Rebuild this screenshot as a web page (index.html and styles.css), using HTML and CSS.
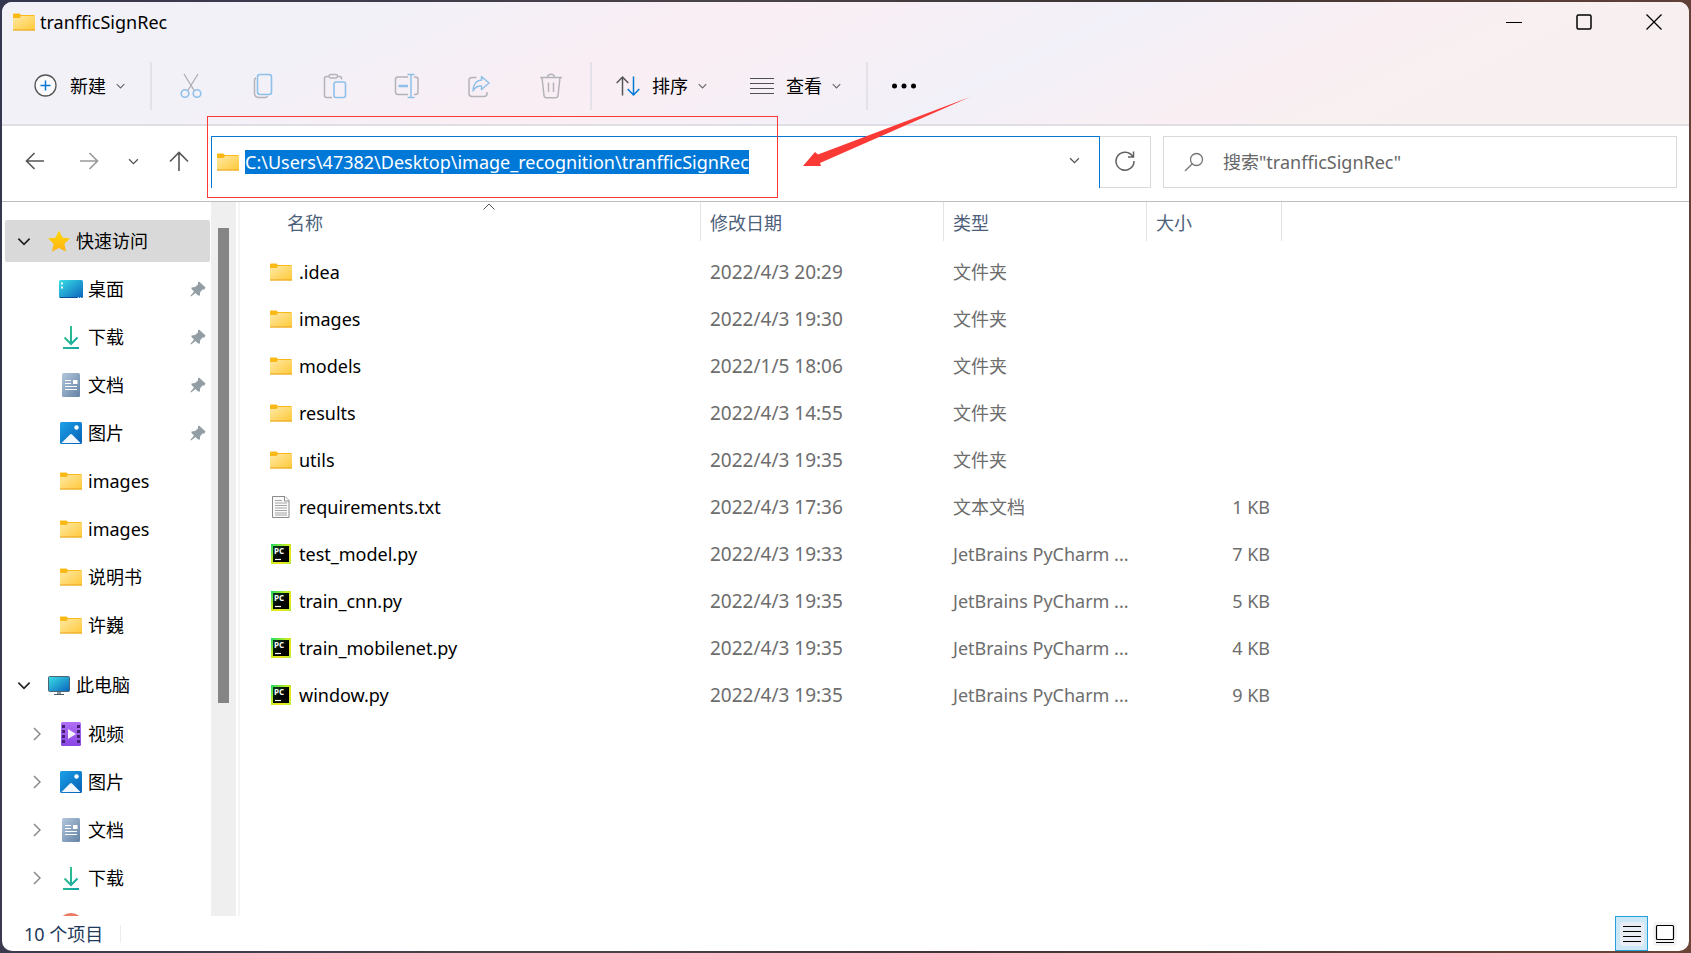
FILE: index.html
```html
<!DOCTYPE html>
<html lang="zh-CN">
<head>
<meta charset="utf-8">
<title>tranfficSignRec</title>
<link rel="stylesheet" href="styles.css">
</head>
<body>
<svg class="defs" aria-hidden="true">
  <defs>
    <linearGradient id="gFolder" x1="0" y1="0" x2="1" y2="1"><stop offset="0" stop-color="#ffe9a6"/><stop offset="1" stop-color="#ffc937"/></linearGradient>
    <linearGradient id="gStar" x1="0" y1="0" x2="0" y2="1"><stop offset="0" stop-color="#ffd800"/><stop offset="1" stop-color="#ffb31a"/></linearGradient>
    <linearGradient id="gDesk" x1="0" y1="0" x2="1" y2="1"><stop offset="0" stop-color="#3ae0e6"/><stop offset="1" stop-color="#0a62bd"/></linearGradient>
    <linearGradient id="gDown" x1="0" y1="0" x2="1" y2="1"><stop offset="0" stop-color="#3cc985"/><stop offset="1" stop-color="#10a2a5"/></linearGradient>
    <linearGradient id="gDoc" x1="0" y1="0" x2="1" y2="1"><stop offset="0" stop-color="#b3c7dc"/><stop offset="1" stop-color="#6382a5"/></linearGradient>
    <linearGradient id="gPic" x1="0" y1="0" x2="1" y2="1"><stop offset="0" stop-color="#1ba1e8"/><stop offset="1" stop-color="#0760b5"/></linearGradient>
    <linearGradient id="gVid" x1="0" y1="0" x2="0" y2="1"><stop offset="0" stop-color="#b070f4"/><stop offset="1" stop-color="#8a45e6"/></linearGradient>
    <linearGradient id="gPc" x1="0" y1="0" x2="1" y2="1"><stop offset="0" stop-color="#17dc6a"/><stop offset=".4" stop-color="#b9ec1e"/><stop offset=".7" stop-color="#f0e51c"/><stop offset="1" stop-color="#b4ee3c"/></linearGradient>
    <linearGradient id="gPcIn" x1="0" y1="0" x2="1" y2="1"><stop offset="0" stop-color="#0c3d1c"/><stop offset=".6" stop-color="#000"/></linearGradient>
    <symbol id="folder" viewBox="0 0 22 18"><path d="M0 1.500Q0 .5 1 .5H6.500L8 2H21.500V6H0Z" fill="#fbb917"/><path d="M0 5H6.500L8 3H22V17.500H0Z" fill="url(#gFolder)"/><path d="M0 17H22" stroke="#e9a31c"/></symbol>
    <symbol id="star" viewBox="0 0 22 22"><path d="M11 .5 14.400 7.600 22 8.500 16.400 13.700 18 21.700 11 18 4 21.700 5.600 13.700 0 8.500 7.600 7.600Z" fill="url(#gStar)"/></symbol>
    <symbol id="desktop" viewBox="0 0 24 18"><rect width="24" height="18" rx="1.500" fill="url(#gDesk)"/><path d="M2 2.500h2v2H2zM2 6.500h2v2H2z" fill="#fff"/><path d="M1 17.500H18" stroke="#0b4f94"/><path d="M19 17.500h4" stroke="#bfe0ff" stroke-dasharray="1 1"/></symbol>
    <symbol id="download" viewBox="0 0 16 23"><path d="M8 0V18M1.500 11.500 8 18 14.500 11.500M0 22H16" fill="none" stroke="url(#gDown)" stroke-width="2"/></symbol>
    <symbol id="doc" viewBox="0 0 18 24"><rect width="18" height="24" rx="1.500" fill="url(#gDoc)"/><path d="M3 7.500H9M3 10.500H9M3 13.500H15M3 16.500H15" stroke="#fff" stroke-width="1.200"/><path d="M11 7h4.500v4H11z" fill="#fff"/></symbol>
    <symbol id="picture" viewBox="0 0 22 22"><rect width="22" height="22" rx="1.500" fill="url(#gPic)"/><path d="M1.500 21 10 12.500Q11 11.600 12 12.500L20.500 21Z" fill="#f1f8ff"/><circle cx="16.500" cy="5.500" r="2.200" fill="#fff"/></symbol>
    <symbol id="video" viewBox="0 0 20 24"><rect width="20" height="24" rx="1.500" fill="url(#gVid)"/><path d="M2.500 3V22M17.500 3V22" stroke="#452174" stroke-width="3" stroke-dasharray="3 2"/><path d="M7 7V17L15 12Z" fill="#f5effd"/></symbol>
    <symbol id="pc" viewBox="0 0 22 19"><rect x=".5" y=".5" width="21" height="15" rx="1" fill="url(#gDesk)" stroke="#4f6472"/><path d="M9 16h4v2H9z" fill="#90999f"/><path d="M6 18.500h10" stroke="#4f5960"/></symbol>
    <symbol id="pin" viewBox="0 0 16 16"><path d="M9 .5 15.500 6.500 14.500 8.500 12.500 8.500 10 11.500 10 14.500 8 14.500 5.500 12 1 15.500.3 15 4 10.500 1.500 8 1.500 6.500 5 6 8 3.500 8 1.500Z" fill="#939da4"/></symbol>
    <symbol id="text" viewBox="0 0 18 22"><path d="M.5.5H13L17 4.500V21.500H.5Z" fill="#fafafa" stroke="#8a8a8a"/><path d="M12.500.5V5H17" fill="#fff" stroke="#8a8a8a"/><path d="M3 4.500H10M3 7H15M3 9.500H15M3 12H15M3 14.500H15M3 17H15M3 19H15" stroke="#a5a5a5"/></symbol>
    <symbol id="pycharm" viewBox="0 0 20 20"><rect width="20" height="20" fill="url(#gPc)"/><rect x="2" y="2" width="16" height="16" fill="url(#gPcIn)"/><text class="pc-label" x="3" y="10">PC</text><path d="M4 15.500H10" stroke="#fff" stroke-width="1.200"/></symbol>
    <symbol id="down" viewBox="0 0 12 8"><path d="M1 1.500 6 6.500 11 1.500" fill="none" stroke="currentColor" stroke-width="1.500"/></symbol>
    <symbol id="right" viewBox="0 0 8 14"><path d="M1 1 7 7 1 13" fill="none" stroke="currentColor" stroke-width="1.500"/></symbol>
  </defs>
</svg>

<div class="window">
  <header class="ribbon">
    <div class="titlebar">
      <svg class="i-folder"><use href="#folder"/></svg>
      <h1 class="title">tranfficSignRec</h1>
      <div class="caption">
        <button aria-label="最小化"><svg width="16" height="16"><path d="M0 8.500H16" stroke="#000"/></svg></button>
        <button aria-label="最大化"><svg width="16" height="16"><rect x="1" y="1" width="14" height="14" rx="1.500" fill="none" stroke="#000" stroke-width="1.500"/></svg></button>
        <button aria-label="关闭"><svg width="16" height="16"><path d="M.5.5 15.500 15.500M15.500.5.5 15.500" stroke="#000" stroke-width="1.300"/></svg></button>
      </div>
    </div>
    <div class="toolbar">
      <div class="group group-new">
        <button class="menu-btn"><svg width="24" height="24"><circle cx="11.500" cy="11.500" r="10.500" fill="#fff" fill-opacity=".7" stroke="#555" stroke-width="1.300"/><path d="M11.500 6.500V16.500M6.500 11.500H16.500" stroke="#0078d4" stroke-width="1.500"/></svg><span>新建</span><svg class="i-caret"><use href="#down"/></svg></button>
      </div>
      <div class="group group-edit">
        <button class="icon-btn" aria-label="剪切"><svg width="24" height="26" fill="none" stroke-width="1.300"><path d="M5 1 15.500 18M19 1 8.500 18" stroke="#aeacb3"/><circle cx="6" cy="20.500" r="3.800" stroke="#8fc0ea" stroke-width="1.600"/><circle cx="18" cy="20.500" r="3.800" stroke="#8fc0ea" stroke-width="1.600"/></svg></button>
        <button class="icon-btn" aria-label="复制"><svg width="24" height="26" fill="none" stroke-width="1.500"><path d="M5 5Q3.500 5.500 3.500 7V20Q3.500 24.500 8 24.500H14Q16 24.500 16.500 23" stroke="#b5b3ba"/><rect x="6.500" y="1.500" width="14" height="20" rx="2.500" stroke="#8fc0ea" stroke-width="1.600"/></svg></button>
        <button class="icon-btn" aria-label="粘贴"><svg width="24" height="26" fill="none" stroke-width="1.500"><path d="M6 3.500H3.500Q1.500 3.500 1.500 5.500V22.500Q1.500 24.500 3.500 24.500H9M14 3.500H16.500Q18.500 3.500 18.500 5.500V6.500" stroke="#b5b3ba"/><rect x="6" y="1.500" width="8.500" height="3.500" rx="1.700" stroke="#b5b3ba"/><rect x="11" y="9" width="11.500" height="15.500" rx="2" stroke="#8fc0ea" stroke-width="1.600"/></svg></button>
        <button class="icon-btn" aria-label="重命名"><svg width="26" height="26" fill="none" stroke-width="1.500"><path d="M14 4H4Q1.500 4 1.500 6.500V19Q1.500 21.500 4 21.500H14M20 4H21.500Q24 4 24 6.500V19Q24 21.500 21.500 21.500H20" stroke="#b5b3ba"/><path d="M4.500 13H14" stroke="#8fc0ea" stroke-width="2.500"/><path d="M17 1.500V24.500M13.500 1.500H20.500M13.500 24.500H20.500" stroke="#8fc0ea"/></svg></button>
        <button class="icon-btn" aria-label="共享"><svg width="24" height="26" fill="none" stroke-width="1.500"><path d="M9.500 4.500H5Q2 4.500 2 7.500V20.500Q2 23.500 5 23.500H17Q20 23.500 20 20.500V19" stroke="#b5b3ba"/><path d="M14.500 3.500 22 10 14.500 16.500V13Q9 12.500 6 18Q6.500 7.500 14.500 7Z" stroke="#8fc0ea" stroke-linejoin="round"/></svg></button>
        <button class="icon-btn" aria-label="删除"><svg width="24" height="26" fill="none" stroke="#b5b3ba" stroke-width="1.500"><path d="M1 4.500H23M8.500 4.500Q8.500 1.300 12 1.300T15.500 4.500M3 4.500 5 22.500Q5.300 24.700 7.500 24.700H16.500Q18.700 24.700 19 22.500L21 4.500M9.500 9.500V19M14.500 9.500V19"/></svg></button>
      </div>
      <div class="group group-view">
        <button class="menu-btn"><svg width="24" height="22" fill="none" stroke-width="1.500"><path d="M6.500 20.500V2M.7 8 6.500 2 12.300 8" stroke="#555"/><path d="M17.500 1.500V20M11.700 14 17.500 20 23.300 14" stroke="#0078d4"/></svg><span>排序</span><svg class="i-caret"><use href="#down"/></svg></button>
        <button class="menu-btn"><svg width="24" height="18"><path d="M0 1.500H24M0 6.500H24M0 11.500H24M0 16.500H24" stroke="#505050" stroke-width="1.200"/></svg><span>查看</span><svg class="i-caret"><use href="#down"/></svg></button>
      </div>
      <button class="more-btn" aria-label="查看更多"><svg width="24" height="6"><circle cx="2.500" cy="3" r="2.500"/><circle cx="12" cy="3" r="2.500"/><circle cx="21.500" cy="3" r="2.500"/></svg></button>
    </div>
  </header>

  <nav class="navbar" aria-label="导航">
    <button class="nav-wide" aria-label="后退"><svg width="20" height="18" fill="none" stroke="#555" stroke-width="1.600"><path d="M19 9H1.500M9.500 1 1.500 9 9.500 17"/></svg></button>
    <button class="nav-wide" aria-label="前进"><svg width="20" height="18" fill="none" stroke="#999" stroke-width="1.600"><path d="M1 9H18.500M10.500 1 18.500 9 10.500 17"/></svg></button>
    <button class="nav-narrow" aria-label="最近的位置"><svg class="i-recent"><use href="#down"/></svg></button>
    <button class="nav-up" aria-label="向上"><svg width="20" height="20" fill="none" stroke="#555" stroke-width="1.600"><path d="M10 20V1.500M1 10.500 10 1.500 19 10.500"/></svg></button>
    <div class="location">
      <div class="address">
        <svg class="i-folder"><use href="#folder"/></svg>
        <input class="path" aria-label="地址" value="C:\Users\47382\Desktop\image_recognition\tranfficSignRec">
        <button class="history" aria-label="以前的位置"><svg class="i-recent"><use href="#down"/></svg></button>
      </div>
      <button class="refresh" aria-label="刷新"><svg width="22" height="22" fill="none" stroke="#606060" stroke-width="1.500"><path d="M18.700 6.500A9 9 0 1 0 20 11M19.500 1.500V7H14"/></svg></button>
    </div>
    <label class="search">
      <svg width="20" height="20" fill="none" stroke="#757575" stroke-width="1.300"><circle cx="12.500" cy="7.500" r="6"/><path d="M8.300 11.800 1 19"/></svg>
      <input aria-label="搜索" placeholder='搜索"tranfficSignRec"'>
    </label>
  </nav>

  <main class="content">
    <aside class="sidebar">
      <ul class="tree">
        <li class="root selected"><svg class="i-open"><use href="#down"/></svg><svg width="22" height="22"><use href="#star"/></svg><a href="#">快速访问</a></li>
        <li class="leaf"><span class="slot"><svg width="24" height="18"><use href="#desktop"/></svg></span><a href="#">桌面</a><svg class="i-pin"><use href="#pin"/></svg></li>
        <li class="leaf"><span class="slot"><svg width="16" height="23"><use href="#download"/></svg></span><a href="#">下载</a><svg class="i-pin"><use href="#pin"/></svg></li>
        <li class="leaf"><span class="slot"><svg width="18" height="24"><use href="#doc"/></svg></span><a href="#">文档</a><svg class="i-pin"><use href="#pin"/></svg></li>
        <li class="leaf"><span class="slot"><svg width="22" height="22"><use href="#picture"/></svg></span><a href="#">图片</a><svg class="i-pin"><use href="#pin"/></svg></li>
        <li class="leaf"><span class="slot"><svg class="i-folder"><use href="#folder"/></svg></span><a href="#">images</a></li>
        <li class="leaf"><span class="slot"><svg class="i-folder"><use href="#folder"/></svg></span><a href="#">images</a></li>
        <li class="leaf"><span class="slot"><svg class="i-folder"><use href="#folder"/></svg></span><a href="#">说明书</a></li>
        <li class="leaf"><span class="slot"><svg class="i-folder"><use href="#folder"/></svg></span><a href="#">许巍</a></li>
        <li class="root computer"><svg class="i-open"><use href="#down"/></svg><svg width="22" height="19"><use href="#pc"/></svg><a href="#">此电脑</a></li>
        <li class="leaf branch"><svg class="i-closed"><use href="#right"/></svg><span class="slot"><svg width="20" height="24"><use href="#video"/></svg></span><a href="#">视频</a></li>
        <li class="leaf branch"><svg class="i-closed"><use href="#right"/></svg><span class="slot"><svg width="22" height="22"><use href="#picture"/></svg></span><a href="#">图片</a></li>
        <li class="leaf branch"><svg class="i-closed"><use href="#right"/></svg><span class="slot"><svg width="18" height="24"><use href="#doc"/></svg></span><a href="#">文档</a></li>
        <li class="leaf branch"><svg class="i-closed"><use href="#right"/></svg><span class="slot"><svg width="16" height="23"><use href="#download"/></svg></span><a href="#">下载</a></li>
        <li class="leaf"><span class="slot"><svg width="24" height="26"><circle cx="12" cy="13" r="13" fill="#ea7a62"/></svg></span></li>
      </ul>
      <div class="scrollbar"><div class="thumb"></div></div>
    </aside>
    <section class="files">
      <table>
        <colgroup><col class="c-name"><col class="c-date"><col class="c-type"><col class="c-size"></colgroup>
        <thead>
          <tr><th aria-sort="ascending"><button class="col-btn col-name">名称<svg class="i-sort" viewBox="0 0 12 7"><path d="M.5 6.500 6 1 11.500 6.500" fill="none" stroke="#555"/></svg></button></th><th><button class="col-btn">修改日期</button></th><th><button class="col-btn">类型</button></th><th><button class="col-btn">大小</button></th></tr>
        </thead>
        <tbody>
          <tr><td class="name"><div class="file"><span class="slot"><svg class="i-folder"><use href="#folder"/></svg></span>.idea</div></td><td class="date">2022/4/3 20:29</td><td>文件夹</td><td></td></tr>
          <tr><td class="name"><div class="file"><span class="slot"><svg class="i-folder"><use href="#folder"/></svg></span>images</div></td><td class="date">2022/4/3 19:30</td><td>文件夹</td><td></td></tr>
          <tr><td class="name"><div class="file"><span class="slot"><svg class="i-folder"><use href="#folder"/></svg></span>models</div></td><td class="date">2022/1/5 18:06</td><td>文件夹</td><td></td></tr>
          <tr><td class="name"><div class="file"><span class="slot"><svg class="i-folder"><use href="#folder"/></svg></span>results</div></td><td class="date">2022/4/3 14:55</td><td>文件夹</td><td></td></tr>
          <tr><td class="name"><div class="file"><span class="slot"><svg class="i-folder"><use href="#folder"/></svg></span>utils</div></td><td class="date">2022/4/3 19:35</td><td>文件夹</td><td></td></tr>
          <tr><td class="name"><div class="file"><span class="slot"><svg width="18" height="22"><use href="#text"/></svg></span>requirements.txt</div></td><td class="date">2022/4/3 17:36</td><td>文本文档</td><td class="size">1 KB</td></tr>
          <tr><td class="name"><div class="file"><span class="slot"><svg width="20" height="20"><use href="#pycharm"/></svg></span>test_model.py</div></td><td class="date">2022/4/3 19:33</td><td>JetBrains PyCharm ...</td><td class="size">7 KB</td></tr>
          <tr><td class="name"><div class="file"><span class="slot"><svg width="20" height="20"><use href="#pycharm"/></svg></span>train_cnn.py</div></td><td class="date">2022/4/3 19:35</td><td>JetBrains PyCharm ...</td><td class="size">5 KB</td></tr>
          <tr><td class="name"><div class="file"><span class="slot"><svg width="20" height="20"><use href="#pycharm"/></svg></span>train_mobilenet.py</div></td><td class="date">2022/4/3 19:35</td><td>JetBrains PyCharm ...</td><td class="size">4 KB</td></tr>
          <tr><td class="name"><div class="file"><span class="slot"><svg width="20" height="20"><use href="#pycharm"/></svg></span>window.py</div></td><td class="date">2022/4/3 19:35</td><td>JetBrains PyCharm ...</td><td class="size">9 KB</td></tr>
        </tbody>
      </table>
    </section>
  </main>

  <footer class="status">
    <span class="count">10 个项目</span>
    <button class="view-btn active" aria-label="详细信息"><svg width="24" height="24"><rect width="24" height="24" rx="3" fill="#e9edf6"/><path d="M3 4.500H21M3 9.500H21M3 14.500H21M3 19.500H21" stroke="#000" stroke-width="1.200"/></svg></button>
    <button class="view-btn" aria-label="大图标"><svg width="24" height="24"><rect width="24" height="24" rx="3" fill="#f4f4f4"/><rect x="3.500" y="3.500" width="17" height="14" rx="1" fill="#fff" stroke="#000" stroke-width="1.200"/><path d="M3 20.500H21" stroke="#000" stroke-width="1.200"/></svg></button>
  </footer>
</div>

<div class="mark-box"></div>
<svg class="mark-arrow" width="168" height="71" viewBox="0 0 168 71"><path d="M0 69 12 55 15 57.500 167 0 17 66 18 69Z" fill="#fb3a36"/></svg>
</body>
</html>
```
FILE: styles.css
```css
* { box-sizing: border-box; }

body {
  position: relative;
  margin: 0;
  height: 100vh;
  padding: 2px;
  overflow: hidden;
  background: linear-gradient(100deg, #35364f, #4a4347 40%, #3c3435 60%, #6b4438);
  font: 18px/24px "Noto Sans", "Noto Sans CJK SC", sans-serif;
  color: #000;
}

button, input { font: inherit; color: inherit; border: 0; padding: 0; background: none; }
button { display: flex; align-items: center; justify-content: center; }
input { outline: 0; min-width: 0; }
a { color: inherit; text-decoration: none; }
svg { flex: none; display: block; }

.defs { position: absolute; width: 0; height: 0; }
.pc-label { font: 700 8px "Open Sans", sans-serif; fill: #fff; }
.i-folder { width: 22px; height: 18px; }
.i-caret { width: 9px; height: 6px; color: #666; }
.i-recent { width: 11px; height: 7px; color: #555; }
.i-open { width: 14px; height: 9px; color: #222; }
.i-closed { width: 8px; height: 14px; color: #8a8a8a; }
.i-pin { width: 16px; height: 16px; margin-left: auto; }
.slot { display: flex; justify-content: center; width: 24px; }

.window {
  display: flex;
  flex-direction: column;
  height: 100%;
  border-radius: 10px;
  overflow: hidden;
  background: #fff;
}

.ribbon {
  flex: none;
  border-bottom: 2px solid #e0dde4;
  background: linear-gradient(155deg, #f2f1f8 20%, #f9eef4 38%, #f8eff5 45%, #f2f0f8 59%, #f9eff3 73%, #f8f0f0 85%);
}
.titlebar { display: flex; align-items: center; height: 46px; padding: 0 0 6px 11px; gap: 5px; }
.title { margin: 0; font-size: 18px; font-weight: 400; }
.caption { display: flex; margin-left: auto; }
.caption button { width: 70px; height: 40px; }

.toolbar { display: flex; align-items: center; height: 76px; }
.group { display: flex; align-items: center; height: 48px; border-right: 2px solid #e4e1e9; }
.group-new { padding: 0 6px 0 8px; }
.group-edit { padding: 0 3px; }
.group-view { padding-right: 6px; }
.menu-btn { height: 48px; padding: 0 19px 0 24px; }
.menu-btn span { margin: 0 10px 0 12px; }
.icon-btn { width: 72px; height: 48px; }
.more-btn { height: 48px; padding: 0 24px; }

.navbar {
  display: flex;
  flex: none;
  padding: 10px 12px 13px 6px;
  border-bottom: 1px solid #bdbdbd;
}
.navbar button { padding-bottom: 2px; }
.nav-wide { width: 54px; }
.nav-narrow { width: 34px; }
.nav-up { width: 58px; }
.location { display: flex; flex: 940 1 0; min-width: 0; height: 52px; margin: 0 12px 0 3px; }
.address {
  display: flex;
  flex: 1;
  align-items: center;
  min-width: 0;
  padding: 0 0 2px 5px;
  border: 1px solid #0078d4;
  border-bottom: 0;
}
.path { field-sizing: content; height: 24px; margin-left: 6px; background: #0078d7; color: #fff; }
.history { width: 50px; height: 49px; margin-left: auto; }
.refresh { width: 51px; border: 1px solid #d9d9d9; border-left: 0; }
.search { display: flex; flex: 472 1 0; align-items: center; min-width: 0; padding: 0 20px; gap: 19px; border: 1px solid #d9d9d9; }
.search input { flex: 1; }
.search input::placeholder { color: #666; opacity: 1; }

.content { display: flex; flex: 1; min-height: 0; }
.sidebar { display: flex; flex: none; width: 238px; border-right: 2px solid #f5f5f5; }
.tree { flex: 1; margin: 0; padding: 18px 1px 0 3px; list-style: none; overflow: hidden; }
.root, .leaf { display: flex; align-items: center; }
.root { height: 42px; padding-left: 12px; }
.root .i-open { margin-right: 17px; }
.root a { margin-left: 6px; }
.selected { margin-bottom: 3px; border-radius: 2px; background: #d9d9d9; }
.leaf { height: 48px; padding: 0 4px 0 54px; gap: 5px; }
.branch { padding-left: 28px; }
.branch .i-closed { margin-right: 13px; }
.computer { margin: 15px 0 4px; }
.scrollbar { flex: none; width: 25px; margin-right: 2px; padding: 26px 7px 0; background: #efefef; }
.thumb { height: 69%; max-height: 475px; background: #858585; }

.files { flex: 1; min-width: 0; overflow: hidden; }
table { width: 1042px; table-layout: fixed; border-collapse: collapse; }
.c-name { width: 461px; }
.c-date { width: 243px; }
.c-type { width: 203px; }
.c-size { width: 135px; }
th { height: 46px; padding: 0; vertical-align: top; font-weight: 400; }
.col-btn {
  position: relative;
  justify-content: flex-start;
  width: 100%;
  height: 39px;
  padding: 2px 0 0 9px;
  border-right: 1px solid #e3e3e3;
  color: #4c607a;
}
.col-name { padding-left: 47px; }
.i-sort { position: absolute; top: 1px; left: 50%; width: 12px; height: 7px; margin-left: 13px; }
td { height: 47px; padding: 0 12px 0 9px; white-space: nowrap; color: #6d6d6d; }
td.name { padding-left: 29px; color: #000; }
.file { display: flex; align-items: center; gap: 6px; }
td.date { font-size: 19px; }
td.size { text-align: right; }

.status { display: flex; flex: none; align-items: center; height: 35px; padding: 0 8px 0 22px; color: #1e395b; }
.count { padding-right: 17px; border-right: 1px solid #ececec; margin-right: auto; line-height: 18px; }
.view-btn { width: 33px; height: 35px; border: 1px solid transparent; }
.view-btn.active { border-color: #26a0da; background: #cce8f6; }

.mark-box { position: absolute; left: 207px; top: 116px; width: 571px; height: 82px; border: 1px solid #fb3a36; }
.mark-arrow { position: absolute; left: 803px; top: 97px; }
```
